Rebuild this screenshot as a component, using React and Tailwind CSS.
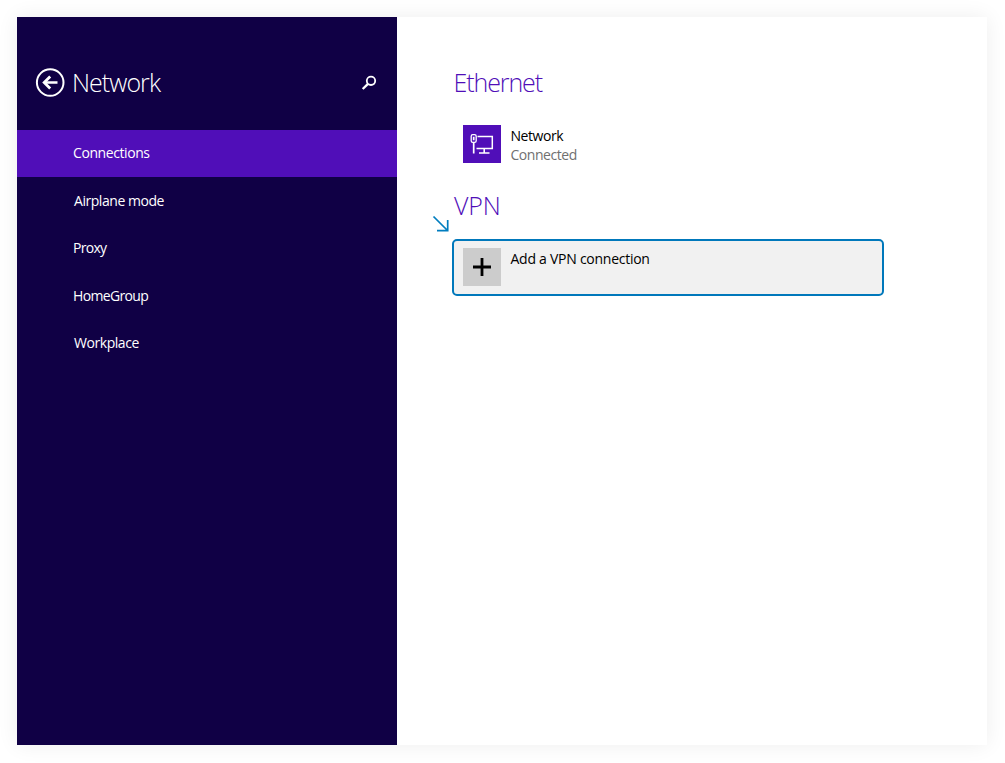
const navItems = [
  { label: 'Connections', style: 'bg-[#500eb8] pl-14 tracking-[-0.42px]' },
  { label: 'Airplane mode', style: 'pl-[57px] tracking-[-0.45px]' },
  { label: 'Proxy', style: 'pl-14 tracking-[-0.7px]' },
  { label: 'HomeGroup', style: 'pl-14 tracking-[-0.65px]' },
  { label: 'Workplace', style: 'pl-[57px] tracking-[-0.45px]' },
];

function BackIcon() {
  return (
    <svg className="h-[30px] w-[30px] shrink-0" viewBox="0 0 30 30" fill="none" stroke="#fff">
      <circle cx="15.2" cy="15.5" r="13.3" strokeWidth="2" />
      <path d="M22.5 15.5H9.5" strokeWidth="2.5" />
      <path d="M15.2 9.5L9.2 15.5L15.2 21.5" strokeWidth="2.8" />
    </svg>
  );
}

function SearchIcon() {
  return (
    <svg className="h-4 w-4 shrink-0" viewBox="0 0 16 16" fill="none" stroke="#fff">
      <circle cx="10" cy="5.8" r="4.2" strokeWidth="1.8" />
      <path d="M7 8.8L1.7 14" strokeWidth="2.4" />
    </svg>
  );
}

function EthernetIcon() {
  return (
    <svg className="h-[38px] w-[38px]" viewBox="0 0 38 38" fill="none" stroke="#fff">
      <path d="M14.5 11.5H29.3V23.5H13.5" strokeWidth="1.5" />
      <path d="M21.2 23.5V27.5M16 28H26.5" strokeWidth="1.6" />
      <rect x="8.2" y="9.7" width="5" height="7.6" rx="1.6" strokeWidth="1.3" />
      <path d="M10.7 11.7V15.3M10.7 17.5V28.5" strokeWidth="1.7" />
    </svg>
  );
}

export default function App() {
  return (
    <div className="h-[763px] w-full bg-white pt-[17px] pl-[17px] font-['Open_Sans','Noto_Sans',sans-serif]">
      <div className="flex h-[728px] w-[970px] bg-white shadow-[0_0_20px_rgba(0,30,20,0.07)]">
        <aside className="w-[379.5px] shrink-0 bg-[#100045] text-white">
          <header className="flex h-[112.5px] items-start pt-[50px] pr-[19.5px] pl-[18px]">
            <BackIcon />
            <h1 className="ml-[7px] text-[25px] leading-[30px] font-light tracking-[-0.95px]">Network</h1>
            <div className="mt-[8px] ml-auto">
              <SearchIcon />
            </div>
          </header>
          <nav>
            {navItems.map((item) => (
              <div key={item.label} className={`flex h-[47.5px] items-center pb-px text-[14px] ${item.style}`}>
                {item.label}
              </div>
            ))}
          </nav>
        </aside>
        <main className="flex-1 pt-[50px] pl-[55.5px]">
          <h2 className="pl-[1.5px] text-[25px] leading-[30px] font-light tracking-[-1.1px] text-[#500eb8]">Ethernet</h2>
          <div className="mt-[28px] flex pl-[11px]">
            <div className="h-[38px] w-[38px] bg-[#500eb8]">
              <EthernetIcon />
            </div>
            <div className="ml-[9.5px] text-[14px] leading-[19px] tracking-[-0.45px]">
              <div className="pt-px text-black">Network</div>
              <div className="text-[#707070]">Connected</div>
            </div>
          </div>
          <div className="relative mt-[26px]">
            <h2 className="pl-[2px] text-[25px] leading-[30px] font-light tracking-[-0.1px] text-[#500eb8]">VPN</h2>
            <svg className="absolute top-[25px] left-[-20px] h-[18px] w-[18px]" viewBox="0 0 18 18" fill="none" stroke="#007dbf" strokeWidth="1.7">
              <path d="M1.5 1.5L15.5 15.5M15.7 5V15.7H5" />
            </svg>
          </div>
          <div className="mt-[19px] flex h-[57px] w-[432px] rounded-[5px] border-2 border-[#0078bb] bg-[#f1f1f1] pt-[7px] pl-[9px]">
            <div className="h-[38px] w-[38px] bg-[#cccccc]">
              <svg className="h-[38px] w-[38px]" viewBox="0 0 38 38" stroke="#000" strokeWidth="2.8">
                <path d="M10 19H28M19 10V28" />
              </svg>
            </div>
            <span className="ml-[9.5px] pt-px text-[14px] leading-[20px] tracking-[-0.26px] text-black">Add a VPN connection</span>
          </div>
        </main>
      </div>
    </div>
  );
}
